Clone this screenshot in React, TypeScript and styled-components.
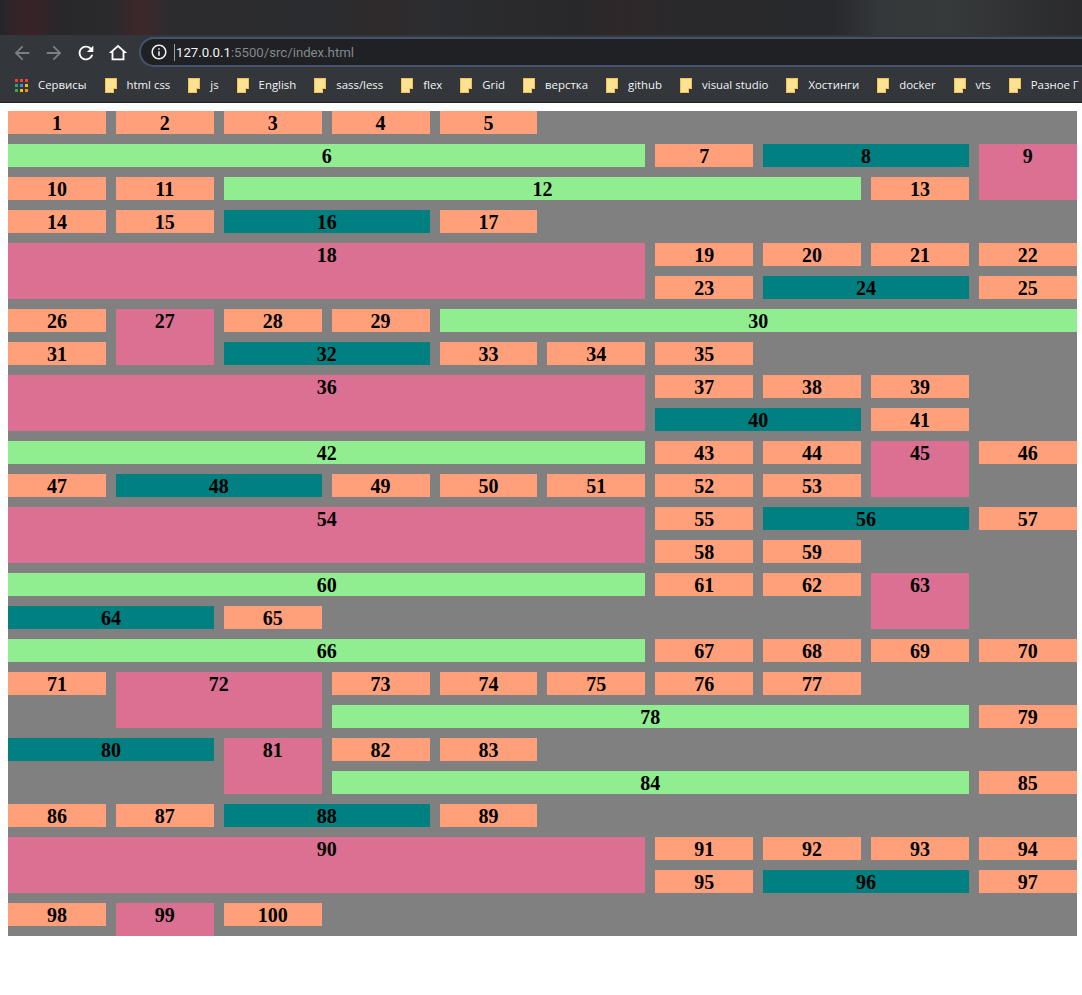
import styled, { createGlobalStyle } from 'styled-components';

const bookmarks = [
  'html css',
  'js',
  'English',
  'sass/less',
  'flex',
  'Grid',
  'верстка',
  'github',
  'visual studio',
  'Хостинги',
  'docker',
  'vts',
  'Разное Г',
];

const appColors = [
  '#ea4335', '#ea4335', '#ea4335',
  '#34a853', '#4285f4', '#fbbc04',
  '#34a853', '#fbbc04', '#f29900',
];

const cells = Array.from({ length: 100 }, (_, i) => i + 1);

function App() {
  return (
    <>
      <GlobalStyle />
      <Browser>
        <TabStrip />
        <Toolbar>
          <NavButton $dim>
            <svg viewBox="0 0 24 24" width="22" height="22">
              <path d="M20 11H7.83l5.59-5.59L12 4l-8 8 8 8 1.41-1.41L7.83 13H20v-2z" />
            </svg>
          </NavButton>
          <NavButton $dim>
            <svg viewBox="0 0 24 24" width="22" height="22">
              <path d="M4 11h12.17l-5.59-5.59L12 4l8 8-8 8-1.41-1.41L16.17 13H4v-2z" />
            </svg>
          </NavButton>
          <NavButton>
            <svg viewBox="0 0 24 24" width="22" height="22">
              <path d="M17.65 6.35A7.958 7.958 0 0 0 12 4c-4.42 0-7.99 3.58-7.99 8s3.57 8 7.99 8c3.73 0 6.84-2.55 7.73-6h-2.08A5.99 5.99 0 0 1 12 18c-3.31 0-6-2.69-6-6s2.69-6 6-6c1.66 0 3.14.69 4.22 1.78L13 11h7V4l-2.35 2.35z" />
            </svg>
          </NavButton>
          <NavButton>
            <svg viewBox="0 0 24 24" width="22" height="22">
              <path d="M12 5.69l5 4.5V18H7v-7.81l5-4.5M12 3L2 12h3v8h14v-8h3L12 3z" />
            </svg>
          </NavButton>
          <UrlBar>
            <InfoIcon viewBox="0 0 24 24" width="18" height="18">
              <path d="M11 7h2v2h-2zm0 4h2v6h-2zm1-9C6.48 2 2 6.48 2 12s4.48 10 10 10 10-4.48 10-10S17.52 2 12 2zm0 18c-4.41 0-8-3.59-8-8s3.59-8 8-8 8 3.59 8 8-3.59 8-8 8z" />
            </InfoIcon>
            <UrlText>
              <UrlHost>127.0.0.1</UrlHost>:5500/src/index.html
            </UrlText>
          </UrlBar>
        </Toolbar>
        <BookmarksBar>
          <Bookmark>
            <AppsGrid>
              {appColors.map((color, i) => (
                <AppDot key={i} $color={color} />
              ))}
            </AppsGrid>
            <BookmarkLabel>Сервисы</BookmarkLabel>
          </Bookmark>
          {bookmarks.map((name) => (
            <Bookmark key={name}>
              <Folder />
              <BookmarkLabel>{name}</BookmarkLabel>
            </Bookmark>
          ))}
        </BookmarksBar>
      </Browser>
      <Page>
        <Container>
          {cells.map((n) => (
            <Cell key={n}>{n}</Cell>
          ))}
        </Container>
      </Page>
    </>
  );
}

export default App;

const GlobalStyle = createGlobalStyle`
  html, body {
    margin: 0;
    padding: 0;
    background: #fff;
  }
`;

const Browser = styled.header`
  display: flex;
  flex-direction: column;
  height: 103px;
  overflow: hidden;
  background: #33363a;
  border-bottom: 1px solid #202124;
  box-sizing: border-box;
`;

const TabStrip = styled.div`
  height: 35px;
  flex-shrink: 0;
  background: linear-gradient(
    90deg,
    #25262a 0,
    #3a2226 28px,
    #28272a 60px,
    #2a292c 110px,
    #3e2829 141px,
    #2c2c2f 172px,
    #2b2c2f 340px,
    #302a2b 380px,
    #2c2d30 430px,
    #28282a 580px,
    #2f2729 620px,
    #29292c 680px,
    #28292c 835px,
    #34383a 880px,
    #373a3b 950px,
    #2f3133 1020px,
    #2b2a2c 1082px
  );
`;

const Toolbar = styled.div`
  display: flex;
  align-items: center;
  height: 35px;
  flex-shrink: 0;
  padding: 0 0 0 11px;
  box-sizing: border-box;
`;

const NavButton = styled.div<{ $dim?: boolean }>`
  display: flex;
  align-items: center;
  justify-content: center;
  width: 22px;
  height: 22px;
  margin-right: 10px;
  fill: ${(p) => (p.$dim ? '#7c7f83' : '#fff')};
`;

const UrlBar = styled.div`
  display: flex;
  align-items: center;
  flex: 1;
  height: 30px;
  margin: 0 -20px 1px 0;
  padding-left: 9px;
  box-sizing: border-box;
  border: 2px solid #46536f;
  border-radius: 15px;
  background: #202124;
`;

const InfoIcon = styled.svg`
  fill: #f1f3f4;
  flex-shrink: 0;
`;

const UrlText = styled.span`
  margin-left: 6px;
  padding-left: 1px;
  border-left: 1px solid #9aa0a6;
  font-family: Roboto, sans-serif;
  font-size: 13.2px;
  line-height: 17px;
  color: #85888c;
  white-space: nowrap;
`;

const UrlHost = styled.span`
  color: #f1f3f4;
`;

const BookmarksBar = styled.nav`
  display: flex;
  align-items: center;
  gap: 18px;
  height: 32px;
  flex-shrink: 0;
  padding: 0 0 2px 15px;
  box-sizing: border-box;
  white-space: nowrap;
`;

const Bookmark = styled.div`
  display: flex;
  align-items: center;
  gap: 10px;
  flex-shrink: 0;
`;

const BookmarkLabel = styled.span`
  font-family: 'Open Sans', sans-serif;
  font-size: 11.4px;
  line-height: 16px;
  color: #f1f3f4;
`;

const AppsGrid = styled.div`
  display: grid;
  grid-template-columns: repeat(3, 3px);
  grid-auto-rows: 3px;
  gap: 2px;
`;

const AppDot = styled.i<{ $color: string }>`
  display: block;
  background: ${(p) => p.$color};
`;

const Folder = styled.div`
  position: relative;
  width: 12px;
  height: 15px;
  box-sizing: border-box;
  border: 1px solid #f2c14e;
  background: #fde293;

  &::after {
    content: '';
    position: absolute;
    right: -1px;
    bottom: -1px;
    width: 3px;
    height: 4px;
    background: #33363a;
    border-left: 1px solid #f2c14e;
    border-top: 1px solid #f2c14e;
  }
`;

const Page = styled.main`
  padding: 8px 5.2px 8px 8px;
`;

const Container = styled.div`
  display: grid;
  grid-template-columns: repeat(10, 1fr);
  gap: 10px;
  background: gray;
`;

const Cell = styled.div`
  padding-top: 1px;
  background: lightsalmon;
  text-align: center;
  font-family: 'Liberation Serif', 'Times New Roman', serif;
  font-size: 20px;
  line-height: 22px;
  font-weight: 700;
  color: #000;

  &:nth-child(6n) {
    grid-column: span 6;
    background: lightgreen;
  }

  &:nth-child(8n) {
    grid-column: span 2;
    background: teal;
  }

  &:nth-child(9n) {
    grid-row: span 2;
    background: palevioletred;
  }
`;
